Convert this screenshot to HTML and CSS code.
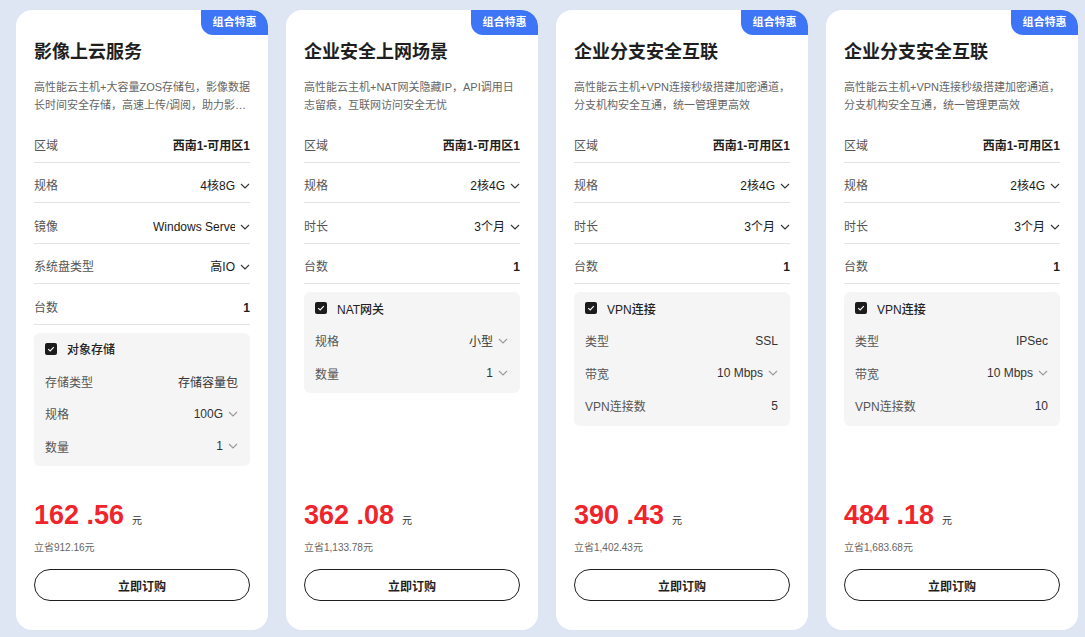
FILE: index.html
```html
<!DOCTYPE html>
<html lang="zh-CN">
<head>
<meta charset="utf-8">
<title>组合特惠</title>
<link rel="stylesheet" href="styles.css">
</head>
<body>
<div class="cards">

  <div class="card">
    <div class="badge">组合特惠</div>
    <h2 class="title">影像上云服务</h2>
    <p class="desc">高性能云主机+大容量ZOS存储包，影像数据长时间安全存储，高速上传/调阅，助力影像业务高效流转</p>
    <div class="rows">
      <div class="row"><span class="label">区域</span><span class="value">西南1-可用区1</span></div>
      <div class="row"><span class="label">规格</span><span class="value drop"><span class="v">4核8G</span><svg class="chev" viewBox="0 0 10 6"><polyline points="1,1 5,5 9,1"/></svg></span></div>
      <div class="row"><span class="label">镜像</span><span class="value drop"><span class="v clip">Windows Server 2019</span><svg class="chev" viewBox="0 0 10 6"><polyline points="1,1 5,5 9,1"/></svg></span></div>
      <div class="row"><span class="label">系统盘类型</span><span class="value drop"><span class="v">高IO</span><svg class="chev" viewBox="0 0 10 6"><polyline points="1,1 5,5 9,1"/></svg></span></div>
      <div class="row"><span class="label">台数</span><span class="value">1</span></div>
    </div>
    <div class="panel">
      <div class="prow head"><span class="check"><svg viewBox="0 0 12 12"><polyline points="3.2,6.2 5.2,8 8.8,4.2"/></svg></span><span>对象存储</span></div>
      <div class="prow"><span class="label">存储类型</span><span class="pvalue">存储容量包</span></div>
      <div class="prow"><span class="label">规格</span><span class="pvalue">100G<svg class="chev light" viewBox="0 0 10 6"><polyline points="1,1 5,5 9,1"/></svg></span></div>
      <div class="prow"><span class="label">数量</span><span class="pvalue">1<svg class="chev light" viewBox="0 0 10 6"><polyline points="1,1 5,5 9,1"/></svg></span></div>
    </div>
    <div class="foot">
      <div class="price"><span class="num">162 .56</span><span class="unit">元</span></div>
      <div class="save">立省912.16元</div>
      <button class="buy">立即订购</button>
    </div>
  </div>

  <div class="card">
    <div class="badge">组合特惠</div>
    <h2 class="title">企业安全上网场景</h2>
    <p class="desc">高性能云主机+NAT网关隐藏IP，API调用日<br>志留痕，互联网访问安全无忧</p>
    <div class="rows">
      <div class="row"><span class="label">区域</span><span class="value">西南1-可用区1</span></div>
      <div class="row"><span class="label">规格</span><span class="value drop"><span class="v">2核4G</span><svg class="chev" viewBox="0 0 10 6"><polyline points="1,1 5,5 9,1"/></svg></span></div>
      <div class="row"><span class="label">时长</span><span class="value drop"><span class="v">3个月</span><svg class="chev" viewBox="0 0 10 6"><polyline points="1,1 5,5 9,1"/></svg></span></div>
      <div class="row"><span class="label">台数</span><span class="value">1</span></div>
    </div>
    <div class="panel">
      <div class="prow head"><span class="check"><svg viewBox="0 0 12 12"><polyline points="3.2,6.2 5.2,8 8.8,4.2"/></svg></span><span>NAT网关</span></div>
      <div class="prow"><span class="label">规格</span><span class="pvalue">小型<svg class="chev light" viewBox="0 0 10 6"><polyline points="1,1 5,5 9,1"/></svg></span></div>
      <div class="prow"><span class="label">数量</span><span class="pvalue">1<svg class="chev light" viewBox="0 0 10 6"><polyline points="1,1 5,5 9,1"/></svg></span></div>
    </div>
    <div class="foot">
      <div class="price"><span class="num">362 .08</span><span class="unit">元</span></div>
      <div class="save">立省1,133.78元</div>
      <button class="buy">立即订购</button>
    </div>
  </div>

  <div class="card">
    <div class="badge">组合特惠</div>
    <h2 class="title">企业分支安全互联</h2>
    <p class="desc">高性能云主机+VPN连接秒级搭建加密通道，<br>分支机构安全互通，统一管理更高效</p>
    <div class="rows">
      <div class="row"><span class="label">区域</span><span class="value">西南1-可用区1</span></div>
      <div class="row"><span class="label">规格</span><span class="value drop"><span class="v">2核4G</span><svg class="chev" viewBox="0 0 10 6"><polyline points="1,1 5,5 9,1"/></svg></span></div>
      <div class="row"><span class="label">时长</span><span class="value drop"><span class="v">3个月</span><svg class="chev" viewBox="0 0 10 6"><polyline points="1,1 5,5 9,1"/></svg></span></div>
      <div class="row"><span class="label">台数</span><span class="value">1</span></div>
    </div>
    <div class="panel">
      <div class="prow head"><span class="check"><svg viewBox="0 0 12 12"><polyline points="3.2,6.2 5.2,8 8.8,4.2"/></svg></span><span>VPN连接</span></div>
      <div class="prow"><span class="label">类型</span><span class="pvalue">SSL</span></div>
      <div class="prow"><span class="label">带宽</span><span class="pvalue">10 Mbps<svg class="chev light" viewBox="0 0 10 6"><polyline points="1,1 5,5 9,1"/></svg></span></div>
      <div class="prow"><span class="label">VPN连接数</span><span class="pvalue">5</span></div>
    </div>
    <div class="foot">
      <div class="price"><span class="num">390 .43</span><span class="unit">元</span></div>
      <div class="save">立省1,402.43元</div>
      <button class="buy">立即订购</button>
    </div>
  </div>

  <div class="card">
    <div class="badge">组合特惠</div>
    <h2 class="title">企业分支安全互联</h2>
    <p class="desc">高性能云主机+VPN连接秒级搭建加密通道，<br>分支机构安全互通，统一管理更高效</p>
    <div class="rows">
      <div class="row"><span class="label">区域</span><span class="value">西南1-可用区1</span></div>
      <div class="row"><span class="label">规格</span><span class="value drop"><span class="v">2核4G</span><svg class="chev" viewBox="0 0 10 6"><polyline points="1,1 5,5 9,1"/></svg></span></div>
      <div class="row"><span class="label">时长</span><span class="value drop"><span class="v">3个月</span><svg class="chev" viewBox="0 0 10 6"><polyline points="1,1 5,5 9,1"/></svg></span></div>
      <div class="row"><span class="label">台数</span><span class="value">1</span></div>
    </div>
    <div class="panel">
      <div class="prow head"><span class="check"><svg viewBox="0 0 12 12"><polyline points="3.2,6.2 5.2,8 8.8,4.2"/></svg></span><span>VPN连接</span></div>
      <div class="prow"><span class="label">类型</span><span class="pvalue">IPSec</span></div>
      <div class="prow"><span class="label">带宽</span><span class="pvalue">10 Mbps<svg class="chev light" viewBox="0 0 10 6"><polyline points="1,1 5,5 9,1"/></svg></span></div>
      <div class="prow"><span class="label">VPN连接数</span><span class="pvalue">10</span></div>
    </div>
    <div class="foot">
      <div class="price"><span class="num">484 .18</span><span class="unit">元</span></div>
      <div class="save">立省1,683.68元</div>
      <button class="buy">立即订购</button>
    </div>
  </div>

</div>
</body>
</html>
```

FILE: styles.css
```css
* { box-sizing: border-box; }
html, body { margin: 0; padding: 0; }
body {
  background: #dfe6f3;
  font-family: "Liberation Sans", "Noto Sans CJK SC", sans-serif;
  color: #222;
  width: 1085px;
  height: 637px;
  overflow: hidden;
}
.cards {
  display: flex;
  gap: 18px;
  padding: 10px 0 0 16px;
}
.card {
  position: relative;
  flex: 0 0 252px;
  width: 252px;
  height: 620px;
  background: #fff;
  border-radius: 16px;
  overflow: hidden;
  padding: 30px 18px 29px;
  display: flex;
  flex-direction: column;
}
.badge {
  position: absolute;
  top: 0;
  right: 0;
  width: 67px;
  height: 25px;
  background: #3e74f6;
  color: #fff;
  font-size: 11px;
  font-weight: 700;
  line-height: 25px;
  text-align: center;
  border-radius: 0 16px 0 12px;
}
.title {
  margin: 0;
  font-size: 18px;
  line-height: 24px;
  font-weight: 700;
  color: #1f1f1f;
}
.desc {
  margin: 14px -6px 0 0;
  font-size: 11px;
  line-height: 18px;
  color: #666;
  height: 36px;
  display: -webkit-box;
  -webkit-line-clamp: 2;
  -webkit-box-orient: vertical;
  overflow: hidden;
}
.rows { margin-top: 8px; }
.row {
  display: flex;
  justify-content: space-between;
  align-items: center;
  padding: 16px 0 8px;
  line-height: 16px;
  height: 40.5px;
  border-bottom: 1px solid #e3e3e3;
  font-size: 12px;
}
.label { color: #555; font-size: 12px; }
.value {
  display: flex;
  align-items: center;
  color: #1f1f1f;
  font-weight: 700;
}
.value.drop { font-weight: 400; color: #1a1a1a; }
.v { white-space: nowrap; }
.clip {
  display: inline-block;
  max-width: 82px;
  overflow: hidden;
}
.chev {
  width: 10px;
  height: 6px;
  margin-left: 5px;
  fill: none;
  stroke: #333;
  stroke-width: 1.1;
}
.chev.light { stroke: #999; }
.panel {
  margin-top: 8px;
  background: #f5f5f5;
  border-radius: 6px;
  padding: 5px 12px 9px 11px;
  display: flex;
  flex-direction: column;
  gap: 10.5px;
}
.prow {
  display: flex;
  justify-content: space-between;
  align-items: center;
  height: 22px;
  font-size: 12px;
}
.prow.head {
  justify-content: flex-start;
  gap: 10px;
  color: #222;
  font-weight: 500;
}
.check {
  width: 12px;
  height: 12px;
  background: #1c1c1c;
  border-radius: 2px;
  display: flex;
}
.check svg {
  width: 12px;
  height: 12px;
  fill: none;
  stroke: #fff;
  stroke-width: 1.1;
}
.pvalue {
  display: flex;
  align-items: center;
  color: #333;
}
.foot {
  margin-top: auto;
  display: flex;
  flex-direction: column;
}
.price {
  display: flex;
  align-items: baseline;
  line-height: 32px;
  height: 32px;
}
.num {
  font-size: 27px;
  font-weight: 700;
  color: #f0242b;
}
.unit {
  font-size: 10px;
  color: #333;
  margin-left: 8px;
}
.save {
  margin-top: 10px;
  font-size: 10px;
  line-height: 14px;
  color: #666;
}
.buy {
  margin-top: 14px;
  height: 32px;
  width: 100%;
  border: 1px solid #1f1f1f;
  border-radius: 16px;
  background: #fff;
  font-family: inherit;
  font-size: 12px;
  font-weight: 700;
  color: #1f1f1f;
  padding: 0;
  cursor: pointer;
}
```
